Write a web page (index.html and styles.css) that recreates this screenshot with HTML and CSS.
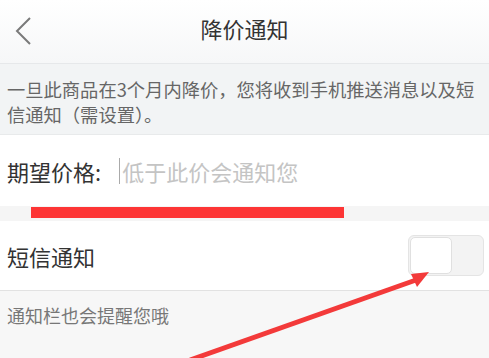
FILE: index.html
```html
<!DOCTYPE html>
<html lang="zh">
<head>
<meta charset="utf-8">
<link rel="stylesheet" href="styles.css">
</head>
<body>
<div class="page">
  <header class="topbar">
    <svg class="back" width="18" height="30" viewBox="0 0 18 30"><path d="M16 2 L3 15 L16 28" fill="none" stroke="#7a7a7a" stroke-width="2"/></svg>
    <h1 class="title">降价通知</h1>
  </header>
  <section class="notice">一旦此商品在3个月内降价，您将收到手机推送消息以及短信通知（需设置）。</section>
  <div class="row price-row">
    <span class="label">期望价格:</span>
    <span class="cursor"></span>
    <span class="placeholder">低于此价会通知您</span>
  </div>
  <div class="gap"><div class="redbar"></div></div>
  <div class="row sms-row">
    <span class="label">短信通知</span>
    <div class="switch"><div class="knob"></div></div>
  </div>
  <section class="hint">通知栏也会提醒您哦</section>
  <svg class="arrow" width="489" height="358" viewBox="0 0 489 358">
    <line x1="190" y1="360" x2="416" y2="280" stroke="#f33a3a" stroke-width="5"/>
    <polygon points="429,272 411,274 417,287" fill="#f33a3a"/>
  </svg>
</div>
</body>
</html>
```

FILE: styles.css
```css
* { box-sizing: border-box; margin: 0; padding: 0; }
html, body { width: 489px; height: 358px; overflow: hidden; }
body { font-family: "Noto Sans CJK SC", "Liberation Sans", sans-serif; background: #f7f7f7; }
.page { position: relative; width: 489px; height: 358px; }
.topbar {
  height: 64px;
  background: linear-gradient(#ffffff, #f6f7f8);
  border-bottom: 1px solid #e6e8ea;
  display: flex; align-items: center; justify-content: center;
  position: relative;
}
.back { position: absolute; left: 14px; top: 16px; }
.title { font-size: 22px; font-weight: normal; color: #333; margin-top: -8px; }
.notice {
  background: #f2f4f5;
  height: 71px;
  padding: 13px 7px 0 7px;
  font-size: 18.3px; line-height: 25px; color: #666;
  border-bottom: 1px solid #e8eaeb;
}
.row { background: #fff; display: flex; align-items: center; padding-left: 7px; }
.price-row { height: 71px; }
.label { font-size: 22px; color: #333; }
.cursor { width: 1px; height: 26px; background: #aaa; margin-left: 18px; margin-right: 2px; }
.placeholder { font-size: 22px; color: #c4c4c4; }
.gap { height: 15px; background: #f5f5f5; padding: 1px 0 0 31px; }
.redbar { width: 313px; height: 11px; background: #fd3535; }
.sms-row { height: 70px; justify-content: space-between; padding-right: 5px; border-bottom: 1px solid #e2e2e2; }
.switch {
  width: 76px; height: 41px; border: 1px solid #e4e4e4; border-radius: 6px;
  background: #f3f3f3; padding: 1px; margin-bottom: 1px;
}
.knob { width: 42px; height: 37px; background: #fff; border: 1px solid #e0e0e0; border-radius: 5px; }
.hint { height: 67px; padding: 11px 7px 0 7px; font-size: 18px; color: #777; background: #f7f7f7; }
.arrow { position: absolute; left: 0; top: 0; pointer-events: none; }
```
